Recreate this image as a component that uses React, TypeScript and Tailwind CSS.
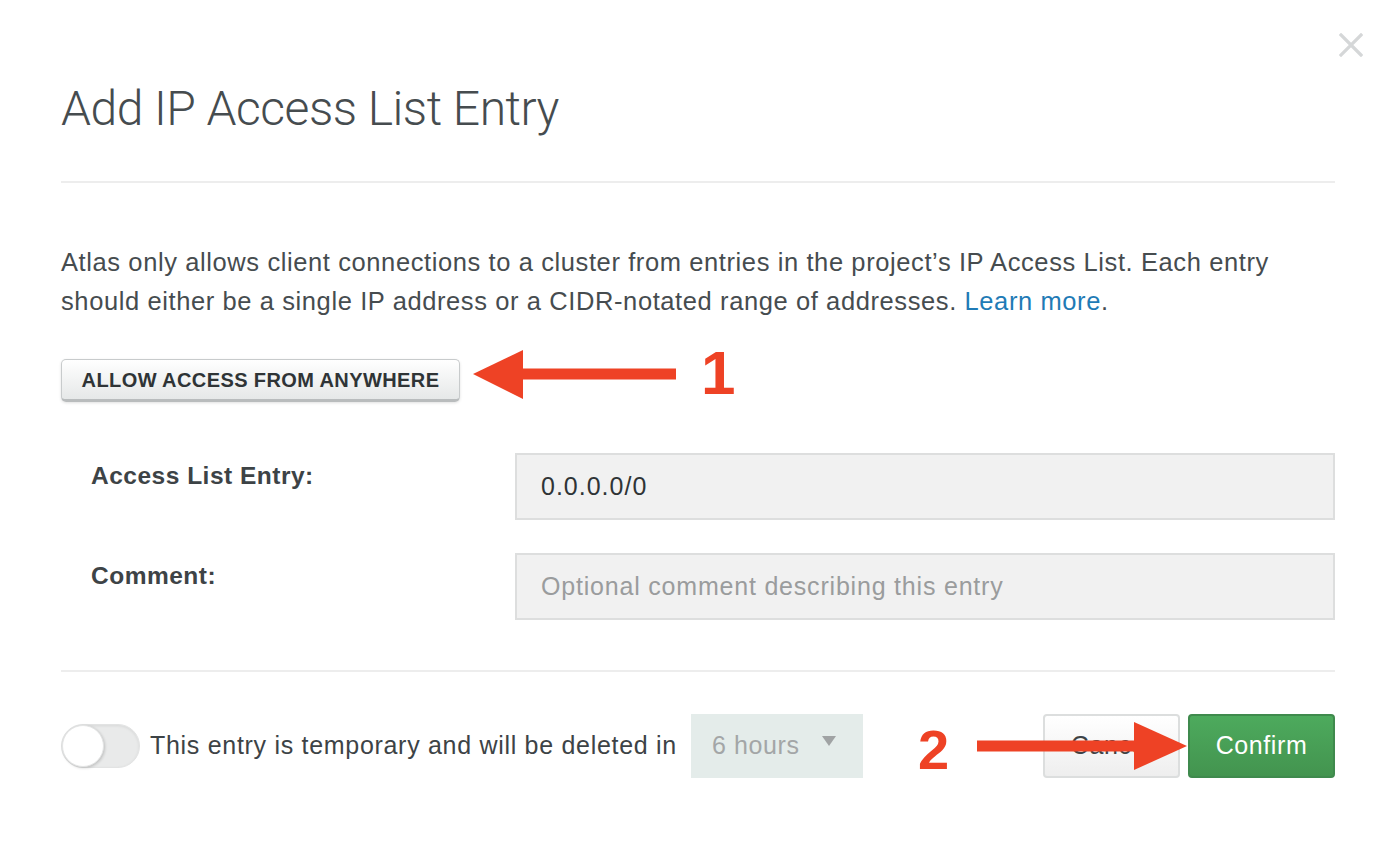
import React, { useState } from 'react';

const font = { fontFamily: '"Liberation Sans", Arial, sans-serif' };

const RightArrow: React.FC<{ className?: string }> = ({ className }) => (
  <svg className={className} viewBox="0 0 210 50" fill="#ee4225">
    <rect x="0" y="19.5" width="160" height="11" />
    <polygon points="157,1 210,25 157,49" />
  </svg>
);

const App: React.FC = () => {
  const [temporary, setTemporary] = useState(false);

  return (
    <div className="w-[1390px] h-[844px] bg-white text-[#464c4f] relative overflow-hidden" style={font}>
      <button className="absolute top-[30px] right-[24px] w-[30px] h-[30px] flex items-center justify-center" aria-label="Close">
        <svg className="w-[24px] h-[24px]" viewBox="0 0 24 24" stroke="#d5d7d8" strokeWidth={3.2} strokeLinecap="square">
          <path d="M2 2l20 20M22 2L2 22" />
        </svg>
      </button>

      <div className="pl-[61px] pr-[55px]">
        <div className="h-[183px] pt-[80px] border-b-2 border-[#ededed]">
          <h2 className="text-[48px] leading-[58px] font-light text-[#464c4f] tracking-[-0.5px]" style={{ fontFamily: 'Roboto, "Liberation Sans", sans-serif' }}>
            Add IP Access List Entry
          </h2>
        </div>

        <p className="mt-[60px] text-[25.5px] leading-[39px] tracking-[0.6px] text-[#464c4f]">
          Atlas only allows client connections to a cluster from entries in the project’s IP Access List. Each entry should either be a single IP address or a CIDR-notated range of addresses.{' '}
          <a href="#" className="text-[#1f7bb6]">Learn more</a>.
        </p>

        <div className="relative mt-[38px] h-[43px]">
          <button className="h-[43px] w-[399px] rounded-[5px] border border-[#c8cbcc] border-b-[3px] border-b-[#b9bcbd] bg-gradient-to-b from-white to-[#e6e8e8] shadow-[0_1px_3px_rgba(0,0,0,0.12)] text-[20px] font-bold text-[#2f3436] tracking-[0.4px]">
            ALLOW ACCESS FROM ANYWHERE
          </button>
          <svg className="absolute left-[412px] top-[-9px] w-[204px] h-[50px]" viewBox="0 0 204 50" fill="#ee4225">
            <polygon points="0,24 50,0 50,49" />
            <rect x="48" y="18.5" width="155" height="11" />
          </svg>
          <span className="absolute left-[640px] top-[-26px] text-[62px] leading-[80px] font-bold text-[#ee4225]">1</span>
        </div>

        <div className="mt-[51px] flex flex-col gap-[33px]">
          <div className="flex items-start">
            <label className="w-[454px] pl-[30px] pt-[5px] text-[24.5px] tracking-[0.5px] font-bold text-[#3d4346]">Access List Entry:</label>
            <div className="flex-1 h-[67px] bg-[#f1f1f1] border-2 border-[#dddede] flex items-center px-[24px] text-[25px] tracking-[1px] text-[#2f3436]">
              0.0.0.0/0
            </div>
          </div>
          <div className="flex items-start">
            <label className="w-[454px] pl-[30px] pt-[5px] text-[24.5px] tracking-[0.5px] font-bold text-[#3d4346]">Comment:</label>
            <input
              className="flex-1 h-[67px] bg-[#f1f1f1] border-2 border-[#dddede] px-[24px] text-[25px] tracking-[0.8px] text-[#2f3436] placeholder:text-[#9a9c9d] outline-none"
              placeholder="Optional comment describing this entry"
              style={font}
            />
          </div>
        </div>

        <div className="mt-[50px] border-t-2 border-[#ededed]" />

        <div className="mt-[42px] flex items-center h-[64px] relative">
          <button
            onClick={() => setTemporary(!temporary)}
            className="w-[79px] h-[44px] rounded-full bg-[#e9eaea] border border-[#e2e3e3] shadow-[inset_0_1px_3px_rgba(0,0,0,0.08)] flex items-center p-0"
          >
            <span className="w-[42px] h-[42px] rounded-full bg-white border border-[#e4e5e5] shadow-[1px_1px_3px_rgba(0,0,0,0.18)]" />
          </button>
          <span className="ml-[10px] text-[25px] tracking-[0.7px] text-[#3d4346]">This entry is temporary and will be deleted in</span>
          <div className="ml-[14px] w-[172px] h-[64px] bg-[#e4ecea] flex items-center pl-[21px] text-[25px] tracking-[0.6px] text-[#a3a6a7] relative">
            6 hours
            <svg className="absolute left-[131px] top-[22px] w-[14px] h-[10px]" viewBox="0 0 14 10" fill="#a0a3a4">
              <polygon points="0,0 14,0 7,10" />
            </svg>
          </div>

          <div className="ml-auto flex items-center gap-[8px]">
            <button className="w-[137px] h-[64px] rounded-[4px] border-2 border-[#dcdede] bg-gradient-to-b from-white to-[#eeeeee] text-[25px] tracking-[0.6px] text-[#3d4346]">
              Cancel
            </button>
            <button className="w-[147px] h-[64px] rounded-[4px] border-2 border-[#3f8a4d] bg-gradient-to-b from-[#4daa5d] to-[#43944f] text-[25px] tracking-[0.6px] text-white">
              Confirm
            </button>
          </div>

          <span className="absolute left-[857px] top-[-4px] text-[56px] leading-[80px] font-bold text-[#ee4225]">2</span>
          <RightArrow className="absolute left-[916px] top-[7px] w-[210px] h-[50px]" />
        </div>
      </div>
    </div>
  );
};

export default App;
